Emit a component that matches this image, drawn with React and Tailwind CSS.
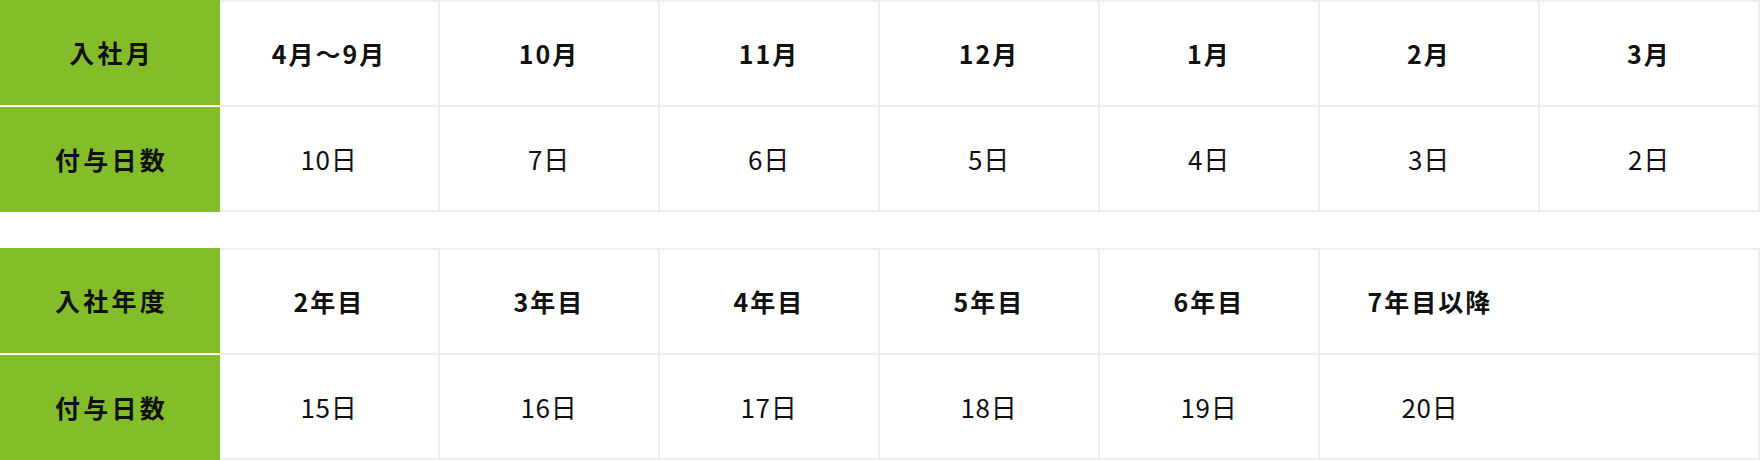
import React from "react";

function HeadCell({ top, children }) {
  return (
    <div
      className={
        "flex items-center justify-center bg-[#84bd2a] text-[25px] font-bold tracking-[0.13em] text-[#111] " +
        (top ? "h-[107px] border-b-2 border-white" : "h-[105px]")
      }
    >
      <span className="pl-[0.13em]">{children}</span>
    </div>
  );
}

function Cell({ top, bold, noRight, children }) {
  return (
    <div
      className={
        "flex items-center justify-center border-[#eeeeee] text-[#111] " +
        (top ? "h-[107px] border-t-2 border-b-2 " : "h-[105px] border-b-2 ") +
        (noRight ? "" : "border-r-2 ") +
        (bold ? "text-[25px] font-bold tracking-[0.08em]" : "text-[26px] font-normal tracking-[0.03em]")
      }
    >
      {children}
    </div>
  );
}

function Table({ head, rows }) {
  return (
    <div className="grid grid-cols-8">
      <HeadCell top>{head[0]}</HeadCell>
      {rows[0].map((t, i) => (
        <Cell key={"a" + i} top bold noRight={t.noRight}>
          {t.text}
        </Cell>
      ))}
      <HeadCell>{head[1]}</HeadCell>
      {rows[1].map((t, i) => (
        <Cell key={"b" + i} noRight={t.noRight}>
          {t.text}
        </Cell>
      ))}
    </div>
  );
}

const w = (arr) => arr.map((text) => ({ text }));

export default function App() {
  return (
    <div
      className="w-[1760px] h-[460px] bg-white flex flex-col gap-[36px]"
      style={{ fontFamily: '"Noto Sans CJK JP", "Noto Sans", sans-serif' }}
    >
      <Table
        head={["入社月", "付与日数"]}
        rows={[
          w(["4月〜9月", "10月", "11月", "12月", "1月", "2月", "3月"]),
          w(["10日", "7日", "6日", "5日", "4日", "3日", "2日"]),
        ]}
      />
      <Table
        head={["入社年度", "付与日数"]}
        rows={[
          [
            ...w(["2年目", "3年目", "4年目", "5年目", "6年目"]),
            { text: "7年目以降", noRight: true },
            { text: "" },
          ],
          [
            ...w(["15日", "16日", "17日", "18日", "19日"]),
            { text: "20日", noRight: true },
            { text: "" },
          ],
        ]}
      />
    </div>
  );
}
